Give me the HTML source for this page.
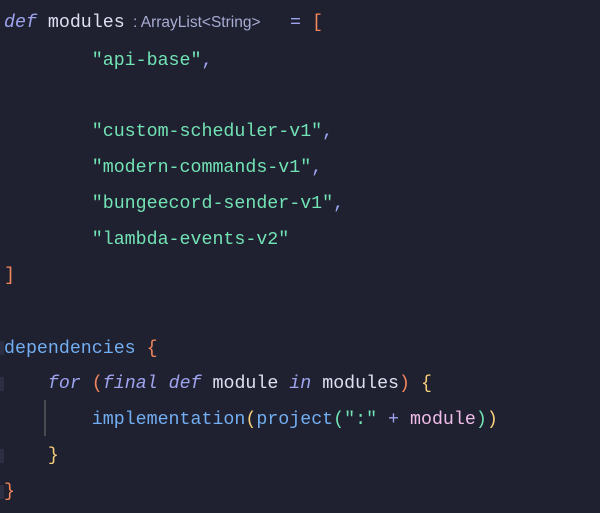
<!DOCTYPE html>
<html><head><style>
html,body{margin:0;padding:0;background:#1f2030;width:600px;height:513px;overflow:hidden}
.l{position:absolute;left:4px;font-family:"Liberation Mono",monospace;font-size:18.3px;white-space:pre;color:#dde0f2;line-height:24px}
.k{color:#9ea4ee;font-style:italic}
.s{color:#72e3b4}
.o{color:#f3875c}
.y{color:#f5cf7a}
.b{color:#72aef2}
.p{color:#9ea4ee}
.m{color:#f0bde8}
.h{position:absolute;top:11px;left:133px;font-family:"Liberation Sans",sans-serif;font-size:15.5px;color:#a7acd2;white-space:pre;line-height:24px}
.g{position:absolute;left:0;width:4px;height:14px;background:#2c2e42}
</style></head><body>
<div class="l" style="top:11px"><span class="k">def</span> modules</div>
<div class="h">: ArrayList&lt;String&gt;</div>
<div class="l" style="top:11px;left:290px"><span class="p">=</span> <span class="o">[</span></div>
<div class="l" style="top:49px">        <span class="s">"api-base"</span><span class="p">,</span></div>
<div class="l" style="top:120px">        <span class="s">"custom-scheduler-v1"</span><span class="p">,</span></div>
<div class="l" style="top:156px">        <span class="s">"modern-commands-v1"</span><span class="p">,</span></div>
<div class="l" style="top:192px">        <span class="s">"bungeecord-sender-v1"</span><span class="p">,</span></div>
<div class="l" style="top:228px">        <span class="s">"lambda-events-v2"</span></div>
<div class="l" style="top:264px"><span class="o">]</span></div>
<div class="l" style="top:337px"><span class="b">dependencies</span> <span class="o">{</span></div>
<div class="l" style="top:372px">    <span class="k">for</span> <span class="o">(</span><span class="k">final def</span> module <span class="k">in</span> modules<span class="o">)</span> <span class="y">{</span></div>
<div class="l" style="top:408px">        <span class="b">implementation</span><span class="y">(</span><span class="b">project</span><span class="s">(</span><span class="s">":"</span> <span class="p">+</span> <span class="m">module</span><span class="s">)</span><span class="y">)</span></div>
<div class="l" style="top:444px">    <span class="y">}</span></div>
<div class="l" style="top:480px"><span class="o">}</span></div>
<div style="position:absolute;left:44px;top:400px;width:2px;height:36px;background:#4a4a50"></div>
<div class="g" style="top:341px"></div>
<div class="g" style="top:377px"></div>
<div class="g" style="top:449px"></div>
<div class="g" style="top:485px"></div>
</body></html>
